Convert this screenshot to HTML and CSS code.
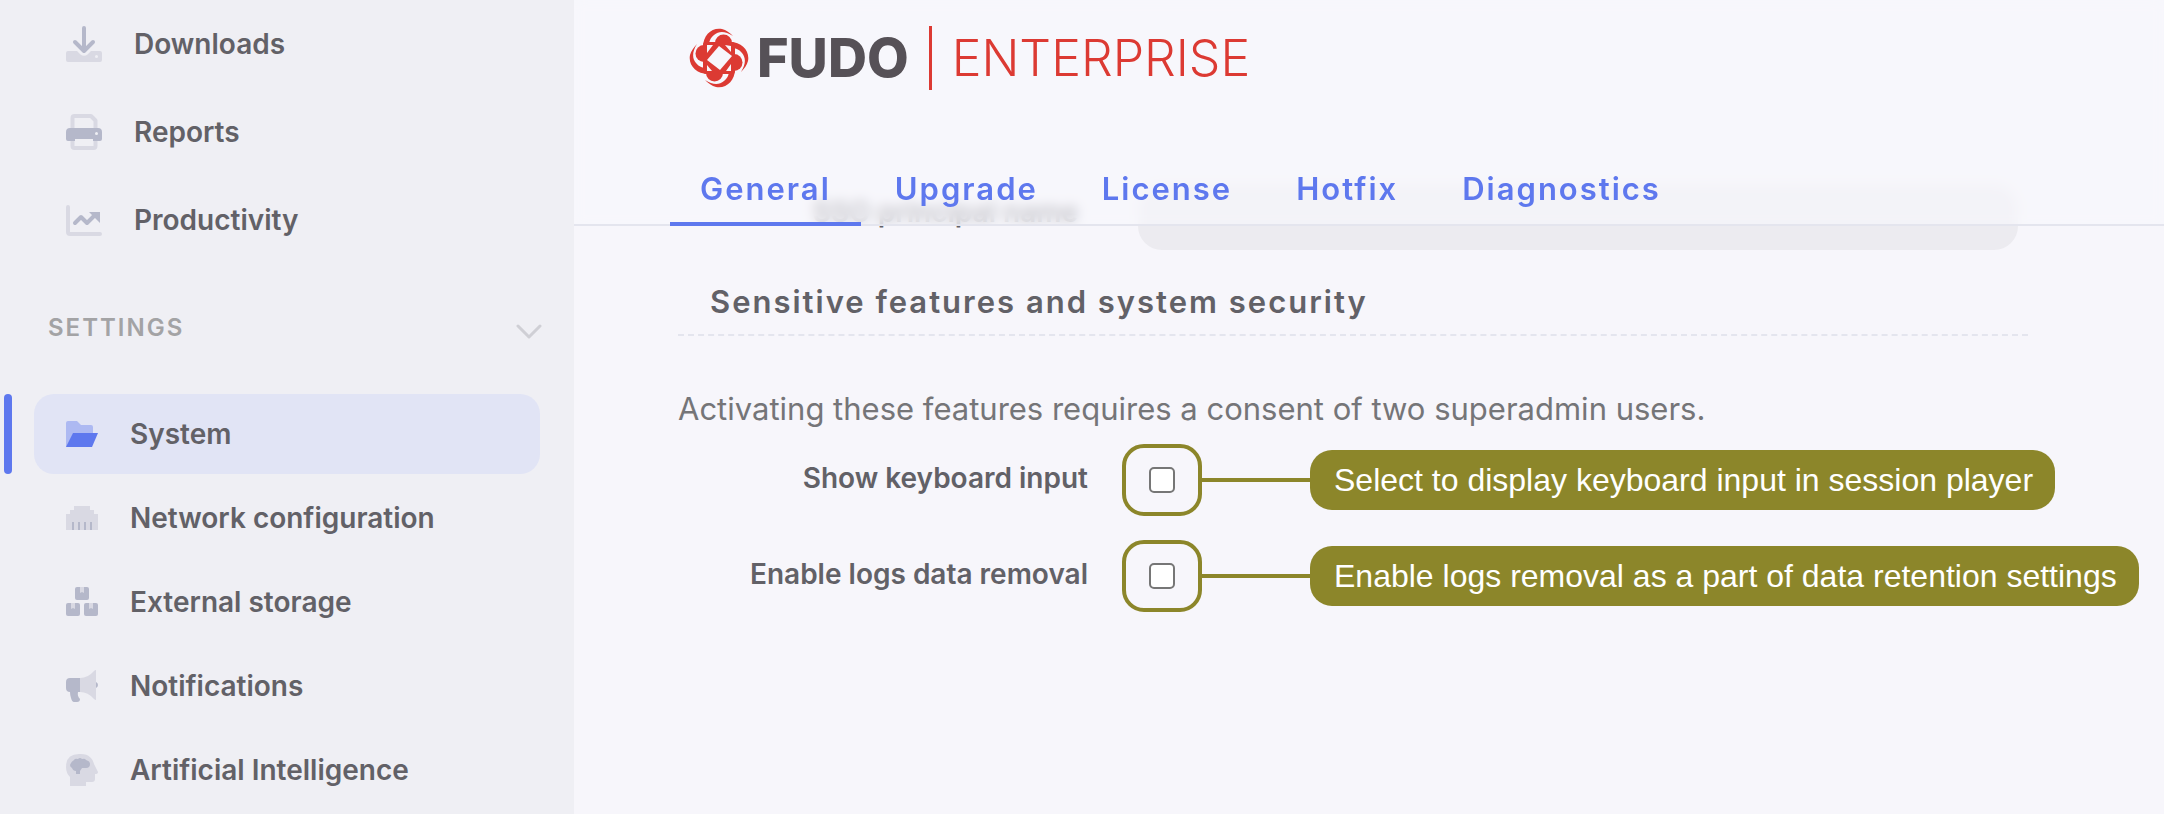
FILE: index.html
```html
<!DOCTYPE html>
<html lang="en">

<head>
    <meta charset="UTF-8">
    <meta name="viewport" content="width=device-width, initial-scale=1.0">
    <title>System - Fudo Enterprise</title>
    <link rel="stylesheet" href="styles.css">
</head>

<body>
    <aside class="sidebar">
        <nav class="menu menu-main">
            <a href="#" class="menu-item">
                <svg class="icon" viewBox="0 0 36 36">
                    <path class="light" d="M2 25h9l3.500 3.500q3.500 2.500 7 0L25 25h9q2 0 2 2v7q0 2-2 2H2q-2 0-2-2v-7q0-2 2-2z" />
                    <circle class="hole" cx="30.500" cy="30.500" r="1.500" />
                    <path class="line" d="M18 2v22M9 16l9 9 9-9" />
                </svg>
                Downloads
            </a>
            <a href="#" class="menu-item">
                <svg class="icon" viewBox="0 0 36 36">
                    <path class="line-light" d="M6.500 15V4q0-2 2-2H25l4.500 4.500V15M6.500 26v6q0 2 2 2h19q2 0 2-2v-6" />
                    <path class="dark" d="M4 14h28q4 0 4 4v7q0 2-2 2h-7v-2H9v2H2q-2 0-2-2v-7q0-4 4-4z" />
                    <circle class="hole" cx="30.500" cy="19.500" r="1.500" />
                </svg>
                Reports
            </a>
            <a href="#" class="menu-item">
                <svg class="icon" viewBox="0 0 36 36">
                    <path class="line-light" d="M2 5v25q0 2 2 2h30" />
                    <path class="line" d="M9 21l6-6 6 6 9-9" />
                    <path class="dark" d="M23 10h11v11z" />
                </svg>
                Productivity
            </a>
        </nav>

        <button type="button" class="section-toggle">
            <span>SETTINGS</span>
            <svg class="chevron" viewBox="0 0 26 16">
                <path d="M2 2l11 11L24 2" />
            </svg>
        </button>

        <nav class="menu menu-settings">
            <a href="#" class="menu-item active">
                <svg class="icon" viewBox="0 0 32 32">
                    <path class="light" d="M0 29V5q0-2 2-2h9l4 4h10q2 0 2 2v6z" />
                    <path class="dark" d="M7 15h25l-6 14H0z" />
                </svg>
                System
            </a>
            <a href="#" class="menu-item">
                <svg class="icon" viewBox="0 0 32 32">
                    <path class="light" d="M0 28V12h4V8h4V4h16v4h4v4h4v16z" />
                    <path class="dark" d="M6 20h2v8H6zM12 20h2v8h-2zM18 20h2v8h-2zM24 20h2v8h-2z" />
                </svg>
                Network configuration
            </a>
            <a href="#" class="menu-item">
                <svg class="icon" viewBox="0 0 32 32">
                    <rect class="dark" x="9" y="1" width="14" height="13" rx="2" />
                    <rect class="dark" x="0" y="17" width="14" height="13" rx="2" />
                    <rect class="dark" x="18" y="17" width="14" height="13" rx="2" />
                    <path class="light" d="M14 1h4v6l-2-1-2 1zM5 17h4v6l-2-1-2 1zM23 17h4v6l-2-1-2 1z" />
                </svg>
                External storage
            </a>
            <a href="#" class="menu-item">
                <svg class="icon" viewBox="0 0 32 32">
                    <path class="dark" d="M4 8h10v14h-2q-1 4 2 7 0 3-3 3H8q-2 0-3-4-1-3-1-6-4 0-4-4v-6q0-4 4-4zM30 12q2 1 2 3t-2 3z" />
                    <path class="light" d="M14 8q8 0 14-7 1-1 2-1v30q-1 0-2-1-6-7-14-7z" />
                </svg>
                Notifications
            </a>
            <a href="#" class="menu-item">
                <svg class="icon" viewBox="0 0 32 32">
                    <path class="light" d="M13 0h2c8 0 12 5 13 10l4 8q0 2-3 2v5q0 3-3 3h-6v4H4v-9Q0 19 0 13 0 0 13 0z" />
                    <path class="dark" d="M8 6q1-2 4-1 2-2 4 0 3-1 4 1 4 1 4 4 0 4-4 4h-4l-2 3v3h-4v-3q-3 0-4-3-2-1-2-3 1-3 4-5z" />
                </svg>
                Artificial Intelligence
            </a>
        </nav>
    </aside>

    <main class="content">
        <header class="header">
            <a href="#" class="logo">
                <svg class="logo-mark" viewBox="0 0 60 60">
                    <defs>
                        <g id="petal">
                            <path d="M14 19C14 7 23-1 33 1c4 1 8 4 11 7C36 3 30 3 25 7c-4 3-5 7-5 11z" />
                            <circle cx="34.500" cy="15" r="8.500" />
                        </g>
                    </defs>
                    <use href="#petal" />
                    <use href="#petal" transform="rotate(90 30 30)" />
                    <use href="#petal" transform="rotate(180 30 30)" />
                    <use href="#petal" transform="rotate(270 30 30)" />
                    <rect x="14" y="14" width="32" height="32" rx="3" />
                    <path class="cut" d="M30 18l13 10-12 14-13-10z" />
                    <path class="cut" d="M18 17h6l-6 8zM36 17l6 1v6zM42 43h-5l5-7zM18 43v-6l5 6z" />
                </svg>
                <span class="logo-name">FUDO</span>
                <span class="logo-edition">ENTERPRISE</span>
            </a>
            <nav class="tabs">
                <a href="#" class="tab active">General</a>
                <a href="#" class="tab">Upgrade</a>
                <a href="#" class="tab">License</a>
                <a href="#" class="tab">Hotfix</a>
                <a href="#" class="tab">Diagnostics</a>
            </nav>
        </header>

        <form class="settings">
            <div class="row row-scrolled">
                <label for="sso">SSO principal name</label>
                <input type="text" id="sso" class="text-field">
            </div>

            <h2>Sensitive features and system security</h2>
            <p class="hint">Activating these features requires a consent of two superadmin users.</p>

            <div class="row">
                <label for="keyboard">Show keyboard input</label>
                <div class="marker"><input type="checkbox" id="keyboard"></div>
                <div class="callout">Select to display keyboard input in session player</div>
            </div>
            <div class="row">
                <label for="logs">Enable logs data removal</label>
                <div class="marker"><input type="checkbox" id="logs"></div>
                <div class="callout">Enable logs removal as a part of data retention settings</div>
            </div>
        </form>
    </main>
</body>

</html>
```
FILE: styles.css
```css
* {
    box-sizing: border-box;
}

body {
    display: flex;
    min-height: 100vh;
    margin: 0;
    font-family: Inter, "Liberation Sans", sans-serif;
    background-color: #f7f6fb;
    color: #626167;
}

a {
    color: inherit;
    text-decoration: none;
}

/* sidebar */
.sidebar {
    flex: 0 0 574px;
    background-color: #efeff4;
}

.menu {
    display: flex;
    flex-direction: column;
}

.menu-item {
    position: relative;
    display: flex;
    align-items: center;
    height: 80px;
    padding-left: 32px;
    border-radius: 20px;
    font-size: 28px;
    font-weight: 600;
}

.menu-main {
    gap: 8px;
    padding: 4px 34px 0;
}

.menu-settings {
    gap: 4px;
    padding: 0 34px;
}

.icon {
    width: 32px;
    height: 32px;
    margin-right: 32px;
}

.menu-main .icon {
    width: 36px;
    height: 36px;
}

.light {
    fill: #d9d9e3;
}

.dark {
    fill: #b5b8ca;
}

.hole {
    fill: #efeff4;
}

.line,
.line-light {
    fill: none;
    stroke: #b5b8ca;
    stroke-width: 4;
    stroke-linecap: round;
    stroke-linejoin: round;
}

.line-light {
    stroke: #d9d9e3;
}

.menu-item.active {
    background-color: #e1e4f5;
}

.menu-item.active::before {
    content: "";
    position: absolute;
    left: -30px;
    width: 8px;
    height: 80px;
    border-radius: 4px;
    background-color: #5e78ee;
}

.active .light {
    fill: #adb9f2;
}

.active .dark {
    fill: #5e78ee;
}

.section-toggle {
    display: flex;
    align-items: center;
    justify-content: space-between;
    width: 100%;
    height: 134px;
    padding: 0 32px 0 48px;
    border: none;
    background: none;
    color: #a3a3a5;
    font-family: inherit;
    font-size: 24px;
    font-weight: 600;
    letter-spacing: 2px;
    cursor: pointer;
}

.chevron {
    width: 26px;
    height: 16px;
    margin-top: 10px;
    fill: none;
    stroke: #cfcfd5;
    stroke-width: 3;
    stroke-linecap: round;
    stroke-linejoin: round;
}

/* header stays above the scrolled form */
.content {
    flex: 1;
    min-width: 0;
}

.header {
    position: sticky;
    top: 0;
    z-index: 1;
    height: 226px;
    display: flex;
    flex-direction: column;
    justify-content: space-between;
    border-bottom: 2px solid #e4e5ee;
    background-color: rgba(247, 247, 252, 0.65);
    backdrop-filter: blur(6px);
}

.logo {
    display: flex;
    align-items: center;
    height: 64px;
    margin: 26px 0 0 115px;
    line-height: 64px;
}

.logo-mark {
    width: 60px;
    height: 60px;
    margin-right: 8px;
    fill: #dc3a33;
}

.cut {
    fill: #f7f6fb;
}

.logo-name {
    color: #565157;
    font-size: 54px;
    font-weight: 800;
}

.logo-edition {
    margin-left: 20px;
    padding-left: 20px;
    border-left: 3px solid #dc3a33;
    color: #dc3a33;
    font-size: 50px;
    font-weight: 300;
}

.tabs {
    display: flex;
    gap: 4px;
    padding-left: 96px;
    margin-bottom: -2px;
}

.tab {
    height: 74px;
    padding: 0 30px;
    border-bottom: 4px solid transparent;
    color: #5e78ee;
    font-size: 31px;
    font-weight: 600;
    line-height: 74px;
    letter-spacing: 2px;
}

.tab.active {
    border-bottom-color: #5e78ee;
}

/* form */
.settings {
    padding: 0 136px 0 104px;
}

.row {
    display: flex;
    align-items: center;
    height: 96px;
}

.row label {
    flex: 0 0 410px;
    margin-right: 34px;
    padding-bottom: 4px;
    text-align: right;
    font-size: 28px;
    font-weight: 600;
}

.row-scrolled {
    height: 72px;
    margin-top: -48px;
}

.row-scrolled label {
    flex-basis: 400px;
    margin-right: 60px;
}

.text-field {
    flex: 1;
    align-self: flex-end;
    height: 66px;
    margin-right: 10px;
    padding: 0 24px;
    border: none;
    border-radius: 24px;
    background-color: #ecebf0;
    font-size: 28px;
}

h2 {
    margin: 0 0 50px;
    padding: 30px 32px 10px;
    border-bottom: 2px dashed #e4e5ee;
    font-size: 31px;
    font-weight: 600;
    line-height: 44px;
    letter-spacing: 2px;
}

.hint {
    margin: 0;
    color: #757578;
    font-size: 31px;
    line-height: 46px;
}

.marker {
    display: flex;
    align-items: center;
    justify-content: center;
    flex: 0 0 80px;
    height: 72px;
    border: 4px solid #8c862a;
    border-radius: 22px;
}

.marker input {
    appearance: none;
    width: 26px;
    height: 26px;
    margin: 0;
    border: 2px solid #767676;
    border-radius: 5px;
    background-color: #fff;
}

.marker input:checked {
    background-color: #5e78ee;
}

.callout {
    position: relative;
    flex: none;
    height: 60px;
    margin-left: 108px;
    padding: 0 22px 0 24px;
    border-radius: 22px;
    background-color: #8c862a;
    color: #fff;
    font-family: "Liberation Sans", Arial, sans-serif;
    font-size: 32px;
    line-height: 60px;
}

/* line from the checkbox to its note */
.callout::before {
    content: "";
    position: absolute;
    top: 28px;
    right: 100%;
    width: 108px;
    height: 4px;
    background-color: #8c862a;
}
```
